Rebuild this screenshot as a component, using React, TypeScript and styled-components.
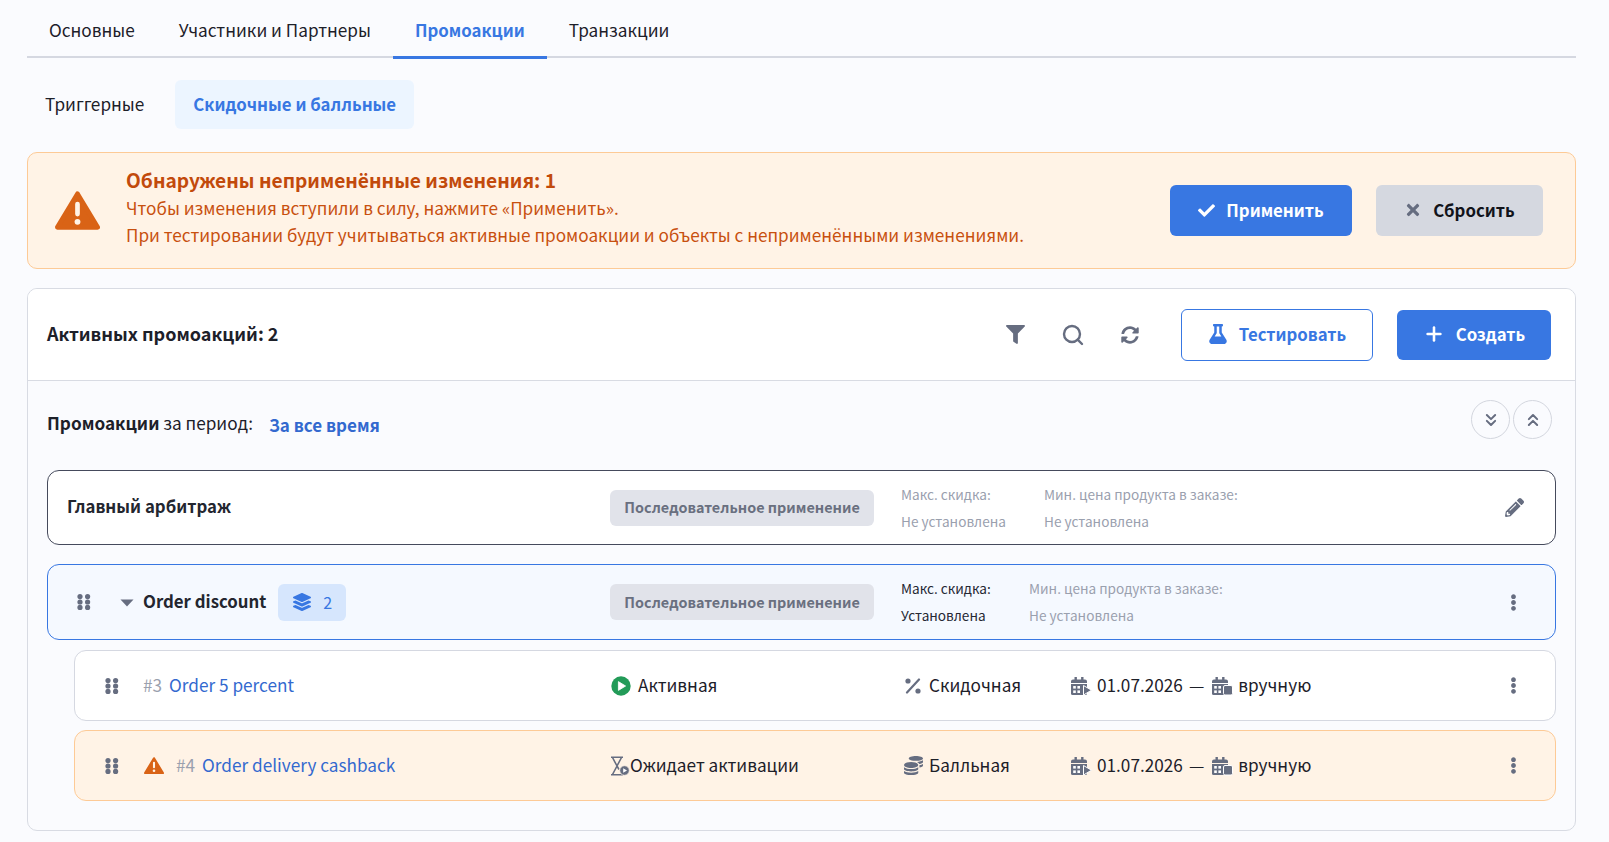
import styled, { createGlobalStyle } from "styled-components";
import {
  FaCheck,
  FaCoins,
  FaEllipsisV,
  FaFilter,
  FaFlask,
  FaLayerGroup,
  FaPencilAlt,
  FaSyncAlt,
  FaTimes,
} from "react-icons/fa";
import { ChevronsDown, ChevronsUp, Plus, Search } from "lucide-react";

const BLUE = "#3877e2";
const LINK = "#3369cf";
const ICON = "#666d80";
const INK = "#1d2029";
const MUTED = "#9aa0ae";
const ORANGE = "#d96316";

const GlobalStyle = createGlobalStyle`
  html, body {
    margin: 0;
    background: #fafbfe;
    font-family: "Noto Sans CJK SC", "Noto Sans", sans-serif;
    color: ${INK};
  }
  * { box-sizing: border-box; }
`;

const Page = styled.div`
  padding: 0 33px 11px 27px;
`;

const Tabs = styled.div`
  display: flex;
  height: 58px;
  border-bottom: 2px solid #d5d8e1;
`;

const Tab = styled.div<{ $active?: boolean }>`
  display: flex;
  align-items: center;
  height: 59px;
  padding: 3px 22px 0 22px;
  font-size: ${(p) => (p.$active ? 16.8 : 17.2)}px;
  font-weight: ${(p) => (p.$active ? 600 : 400)};
  color: ${(p) => (p.$active ? BLUE : INK)};
  border-bottom: 3px solid ${(p) => (p.$active ? BLUE : "transparent")};
`;

const SubTabs = styled.div`
  display: flex;
  gap: 13px;
  margin-top: 22px;
`;

const SubTab = styled.div<{ $active?: boolean }>`
  display: flex;
  align-items: center;
  height: 49px;
  padding: 0 18px 2px;
  border-radius: 6px;
  font-size: ${(p) => (p.$active ? 16.8 : 17.2)}px;
  font-weight: ${(p) => (p.$active ? 600 : 400)};
  color: ${(p) => (p.$active ? BLUE : INK)};
  background: ${(p) => (p.$active ? "#ecf5ff" : "transparent")};
`;

const Banner = styled.div`
  display: flex;
  align-items: center;
  height: 117px;
  margin-top: 23px;
  padding: 0 32px 0 27px;
  border: 1.5px solid #fdca96;
  border-radius: 10px;
  background: #fff3e6;
`;

const BannerIcon = styled.div`
  flex: none;
  width: 46px;
  height: 40px;
  margin: 0 25px 0 0;
`;

const BannerText = styled.div`
  flex: 1;
  padding-bottom: 7px;
  color: #c8500f;
  font-size: 17.2px;
  line-height: 27px;
`;

const BannerTitle = styled.div`
  font-size: 19.2px;
  font-weight: 600;
  line-height: 28px;
  color: #c24a0c;
`;

const ButtonRow = styled.div<{ $gap: number }>`
  display: flex;
  align-items: center;
  gap: ${(p) => p.$gap}px;
`;

const Button = styled.button<{ $kind: "primary" | "grey" | "outline"; $w: number; $h: number }>`
  display: flex;
  align-items: center;
  justify-content: center;
  gap: 11px;
  width: ${(p) => p.$w}px;
  height: ${(p) => p.$h}px;
  padding: 0 0 1px;
  border-radius: 6px;
  font-family: inherit;
  font-size: 16.8px;
  font-weight: 600;
  color: ${(p) => (p.$kind === "primary" ? "#fff" : p.$kind === "outline" ? BLUE : "#11131a")};
  background: ${(p) => (p.$kind === "primary" ? BLUE : p.$kind === "outline" ? "#fff" : "#d5d8e0")};
  border: ${(p) => (p.$kind === "outline" ? `1.5px solid ${BLUE}` : "none")};
  svg {
    color: ${(p) => (p.$kind === "grey" ? ICON : "inherit")};
  }
`;

const Card = styled.div`
  margin-top: 19px;
  border: 1px solid #d8dbe3;
  border-radius: 10px;
  overflow: hidden;
`;

const CardHeader = styled.div`
  display: flex;
  align-items: center;
  height: 92px;
  padding: 0 24px 0 19px;
  background: #fff;
  border-bottom: 1px solid #d8dbe3;
`;

const CardTitle = styled.div`
  flex: 1;
  padding-bottom: 3px;
  font-size: 18px;
  font-weight: 600;
`;

const ToolIcons = styled.div`
  display: flex;
  align-items: center;
  gap: 36px;
  margin-right: 42px;
  color: ${ICON};
`;

const CardBody = styled.div`
  padding: 0 19px 29px 19px;
`;

const PeriodRow = styled.div`
  display: flex;
  align-items: flex-start;
  height: 89px;
  padding-top: 19px;
  font-size: 17.2px;
`;

const PeriodLabel = styled.span`
  margin-top: 10px;
  b {
    font-weight: 700;
  }
`;

const PeriodValue = styled.span`
  margin: 12px 0 0 16px;
  flex: 1;
  color: ${LINK};
  font-weight: 600;
  font-size: 17px;
`;

const RoundButtons = styled.div`
  display: flex;
  gap: 3px;
  margin-right: 4px;
`;

const RoundButton = styled.div`
  display: flex;
  align-items: center;
  justify-content: center;
  width: 39px;
  height: 39px;
  border: 1px solid #d3d6de;
  border-radius: 50%;
  color: ${ICON};
`;

const tones = {
  plain: { bg: "#fff", line: "#d5d8e1" },
  dark: { bg: "#fff", line: "#454a5c" },
  blue: { bg: "#f5f9ff", line: BLUE },
  warn: { bg: "#fff3e6", line: "#fdca96" },
};

const Row = styled.div<{ $tone: keyof typeof tones; $cols: string; $pad: number; $h: number; $mt: number; $ml?: number }>`
  display: grid;
  grid-template-columns: ${(p) => p.$cols};
  align-items: center;
  height: ${(p) => p.$h}px;
  margin-top: ${(p) => p.$mt}px;
  margin-left: ${(p) => p.$ml ?? 0}px;
  padding: 0 31px 0 ${(p) => p.$pad}px;
  border: 1px solid ${(p) => tones[p.$tone].line};
  border-radius: 12px;
  background: ${(p) => tones[p.$tone].bg};
`;

const Cell = styled.div`
  display: flex;
  align-items: center;
  min-width: 0;
  white-space: nowrap;
`;

const EndCell = styled(Cell)`
  justify-content: flex-end;
  color: ${ICON};
`;

const Kebab = styled(FaEllipsisV)`
  margin-right: 2px;
`;

const GroupName = styled.span`
  padding-bottom: 3px;
  font-size: 16.8px;
  font-weight: 600;
  color: #23262f;
`;

const Caret = styled.svg`
  width: 14px;
  height: 8px;
  margin: 1px 9px 0 29px;
  flex: none;
`;

const CountBadge = styled.span`
  display: flex;
  align-items: center;
  gap: 12px;
  height: 37px;
  margin-left: 12px;
  padding: 0 14px 0 15px;
  border-radius: 6px;
  background: #d6e6fd;
  color: ${BLUE};
  font-size: 16px;
  font-weight: 400;
`;

const Pill = styled.span`
  display: flex;
  align-items: center;
  justify-content: center;
  height: 36px;
  padding-bottom: 2px;
  border-radius: 6px;
  background: #e1e3ea;
  color: #6a7080;
  font-size: 14.4px;
  font-weight: 600;
`;

const Limit = styled.div<{ $on?: boolean }>`
  font-size: 13.6px;
  line-height: 27px;
  color: ${(p) => (p.$on ? "#252833" : MUTED)};
`;

const Grip = styled.svg`
  width: 14px;
  height: 16px;
  flex: none;
`;

const GripGap = styled.span<{ $w: number }>`
  width: ${(p) => p.$w}px;
`;

const PromoNum = styled.span<{ $ml?: number }>`
  margin: 0 7px 3px ${(p) => p.$ml ?? 0}px;
  color: ${MUTED};
  font-size: 17.2px;
`;

const PromoName = styled.span`
  padding-bottom: 3px;
  color: ${LINK};
  font-size: 17.2px;
`;

const Meta = styled(Cell)`
  font-size: 17.2px;
  color: ${INK};
  span {
    padding-bottom: 3px;
  }
`;

const TypeIcon = styled.i`
  display: flex;
  justify-content: center;
  width: 20px;
  margin-right: 6px;
  color: ${ICON};
`;

const StatusText = styled.span<{ $ml: number }>`
  margin-left: ${(p) => p.$ml}px;
`;

const Dash = styled.span`
  margin: 0 7px 0 6px;
`;

function GripIcon() {
  return (
    <Grip viewBox="0 0 14 16" fill={ICON}>
      {[2.6, 8, 13.4].map((y) =>
        [3, 10.6].map((x) => <circle key={`${x}-${y}`} cx={x} cy={y} r="2.6" />),
      )}
    </Grip>
  );
}

function WarnIcon({ size }: { size: number }) {
  return (
    <svg width={size} height={size * 0.87} viewBox="0 0 46 40">
      <path
        d="M23 3 L43.5 37 H2.5 Z"
        fill={ORANGE}
        stroke={ORANGE}
        strokeWidth="5"
        strokeLinejoin="round"
      />
      <rect x="20.6" y="11" width="4.8" height="15" rx="2.4" fill="#fff3e6" />
      <circle cx="23" cy="31.5" r="3" fill="#fff3e6" />
    </svg>
  );
}

function PercentIcon() {
  return (
    <svg width="16" height="16" viewBox="0 0 16 16">
      <path d="M14 1.5 L2 14.5" stroke={ICON} strokeWidth="2.2" strokeLinecap="round" />
      <circle cx="3" cy="3" r="2.6" fill={ICON} />
      <circle cx="13" cy="13" r="2.6" fill={ICON} />
    </svg>
  );
}

function CalendarIcon({ end }: { end?: boolean }) {
  return (
    <svg width="22" height="20" viewBox="0 0 22 20" style={{ flex: "none" }}>
      <path
        d="M1 5.5a2 2 0 0 1 2-2h1.5V1h2.4v2.5h4.2V1h2.4v2.5H15a2 2 0 0 1 2 2V7H1z"
        fill={ICON}
      />
      <path d="M1 8h16v9.5a1.5 1.5 0 0 1-1.5 1.5h-13A1.5 1.5 0 0 1 1 17.5z" fill={ICON} />
      {[3.2, 7.4].map((x) =>
        [10, 14.4].map((y) => (
          <rect key={`${x}-${y}`} x={x} y={y} width="2.6" height="2.6" fill="#fff" />
        )),
      )}
      {end ? (
        <rect x="12.5" y="9.5" width="9" height="9.5" rx="1.5" fill={ICON} stroke="#fff" strokeWidth="1" />
      ) : (
        <path d="M13.5 9.5 L21.5 14.2 L13.5 19 Z" fill={ICON} stroke="#fff" strokeWidth="1" />
      )}
    </svg>
  );
}

function PlayBadge() {
  return (
    <svg width="20" height="20" viewBox="0 0 20 20" style={{ marginLeft: 1 }}>
      <circle cx="10" cy="10" r="9.7" fill="#229b58" />
      <path d="M7.4 5.6 L14.6 10 L7.4 14.4 Z" fill="#fff" stroke="#fff" strokeWidth="0.8" strokeLinejoin="round" />
    </svg>
  );
}

function HourglassIcon() {
  return (
    <svg width="20" height="20" viewBox="0 0 20 20" style={{ flex: "none" }}>
      <path d="M1 1.2h12M1 18.8h12" stroke={ICON} strokeWidth="1.6" fill="none" />
      <path d="M2.5 1.5 L7 10 L2.5 18.5 M11.5 1.5 L7 10 L9 13.5" stroke={ICON} strokeWidth="1.6" fill="none" />
      <circle cx="14.5" cy="14.5" r="4.8" fill={ICON} stroke="#fff3e6" strokeWidth="0.8" />
      <path d="M13.2 12.3 L17 14.5 L13.2 16.7 Z" fill="#fff" />
    </svg>
  );
}

function Dates() {
  return (
    <Meta>
      <CalendarIcon />
      <StatusText $ml={5}>01.07.2026</StatusText>
      <Dash>—</Dash>
      <CalendarIcon end />
      <StatusText $ml={5}>вручную</StatusText>
    </Meta>
  );
}

const PILL_COL = "264px";

function App() {
  return (
    <Page>
      <GlobalStyle />
      <Tabs>
        <Tab>Основные</Tab>
        <Tab>Участники и Партнеры</Tab>
        <Tab $active>Промоакции</Tab>
        <Tab>Транзакции</Tab>
      </Tabs>
      <SubTabs>
        <SubTab>Триггерные</SubTab>
        <SubTab $active>Скидочные и балльные</SubTab>
      </SubTabs>

      <Banner>
        <BannerIcon>
          <WarnIcon size={45} />
        </BannerIcon>
        <BannerText>
          <BannerTitle>Обнаружены неприменённые изменения: 1</BannerTitle>
          <div>Чтобы изменения вступили в силу, нажмите «Применить».</div>
          <div>При тестировании будут учитываться активные промоакции и объекты с неприменёнными изменениями.</div>
        </BannerText>
        <ButtonRow $gap={24}>
          <Button $kind="primary" $w={182} $h={51}>
            <FaCheck size={17} />
            Применить
          </Button>
          <Button $kind="grey" $w={167} $h={51}>
            <FaTimes size={18} />
            Сбросить
          </Button>
        </ButtonRow>
      </Banner>

      <Card>
        <CardHeader>
          <CardTitle>Активных промоакций: 2</CardTitle>
          <ToolIcons>
            <FaFilter size={19} />
            <Search size={24} strokeWidth={2.4} />
            <FaSyncAlt size={18} />
          </ToolIcons>
          <ButtonRow $gap={24}>
            <Button $kind="outline" $w={192} $h={52}>
              <FaFlask size={20} />
              Тестировать
            </Button>
            <Button $kind="primary" $w={154} $h={50}>
              <Plus size={22} strokeWidth={2.8} />
              Создать
            </Button>
          </ButtonRow>
        </CardHeader>

        <CardBody>
          <PeriodRow>
            <PeriodLabel>
              <b>Промоакции</b> за период:
            </PeriodLabel>
            <PeriodValue>За все время</PeriodValue>
            <RoundButtons>
              <RoundButton>
                <ChevronsDown size={20} strokeWidth={2.4} />
              </RoundButton>
              <RoundButton>
                <ChevronsUp size={20} strokeWidth={2.4} />
              </RoundButton>
            </RoundButtons>
          </PeriodRow>

          <Row $tone="dark" $h={75} $mt={0} $pad={19} $cols={`543px ${PILL_COL} 27px 143px 1fr 24px`}>
            <Cell>
              <GroupName>Главный арбитраж</GroupName>
            </Cell>
            <Pill>Последовательное применение</Pill>
            <span />
            <div>
              <Limit>Макс. скидка:</Limit>
              <Limit>Не установлена</Limit>
            </div>
            <div>
              <Limit>Мин. цена продукта в заказе:</Limit>
              <Limit>Не установлена</Limit>
            </div>
            <EndCell>
              <FaPencilAlt size={19} />
            </EndCell>
          </Row>

          <Row $tone="blue" $h={76} $mt={19} $pad={29} $cols={`533px ${PILL_COL} 27px 128px 1fr 24px`}>
            <Cell>
              <GripIcon />
              <Caret viewBox="0 0 14 8" fill={ICON}>
                <path d="M0.5 0.5 H13.5 L7 7.5 Z" />
              </Caret>
              <GroupName>Order discount</GroupName>
              <CountBadge>
                <FaLayerGroup size={18} />2
              </CountBadge>
            </Cell>
            <Pill>Последовательное применение</Pill>
            <span />
            <div>
              <Limit $on>Макс. скидка:</Limit>
              <Limit $on>Установлена</Limit>
            </div>
            <div>
              <Limit>Мин. цена продукта в заказе:</Limit>
              <Limit>Не установлена</Limit>
            </div>
            <EndCell>
              <Kebab size={17} />
            </EndCell>
          </Row>

          <Row $tone="plain" $h={71} $mt={10} $ml={27} $pad={30} $cols="505px 293px 167px 1fr 24px">
            <Cell>
              <GripIcon />
              <GripGap $w={24} />
              <PromoNum>#3</PromoNum>
              <PromoName>Order 5 percent</PromoName>
            </Cell>
            <Meta>
              <PlayBadge />
              <StatusText $ml={7}>Активная</StatusText>
            </Meta>
            <Meta>
              <TypeIcon>
                <PercentIcon />
              </TypeIcon>
              <span>Скидочная</span>
            </Meta>
            <Dates />
            <EndCell>
              <Kebab size={17} />
            </EndCell>
          </Row>

          <Row $tone="warn" $h={71} $mt={9} $ml={27} $pad={30} $cols="505px 293px 167px 1fr 24px">
            <Cell>
              <GripIcon />
              <GripGap $w={25} />
              <WarnIcon size={20} />
              <PromoNum $ml={12}>#4</PromoNum>
              <PromoName>Order delivery cashback</PromoName>
            </Cell>
            <Meta>
              <HourglassIcon />
              <span>Ожидает активации</span>
            </Meta>
            <Meta>
              <TypeIcon>
                <FaCoins size={19} />
              </TypeIcon>
              <span>Балльная</span>
            </Meta>
            <Dates />
            <EndCell>
              <Kebab size={17} />
            </EndCell>
          </Row>
        </CardBody>
      </Card>
    </Page>
  );
}

export default App;
